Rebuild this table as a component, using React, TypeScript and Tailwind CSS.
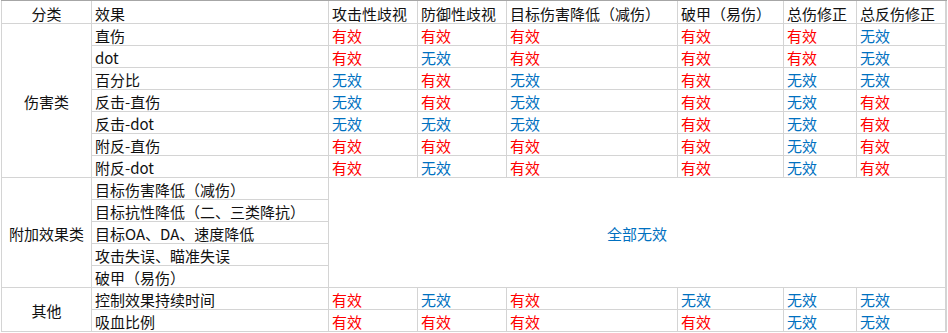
const cols = ["攻击性歧视", "防御性歧视", "目标伤害降低（减伤）", "破甲（易伤）", "总伤修正", "总反伤修正"];

// 1 = 有效, 0 = 无效
const damageRows: [string, number[]][] = [
  ["直伤", [1, 1, 1, 1, 1, 0]],
  ["dot", [1, 0, 1, 1, 1, 0]],
  ["百分比", [0, 1, 0, 1, 0, 0]],
  ["反击-直伤", [0, 1, 0, 1, 0, 1]],
  ["反击-dot", [0, 0, 0, 1, 0, 1]],
  ["附反-直伤", [1, 1, 1, 1, 0, 1]],
  ["附反-dot", [1, 0, 1, 1, 0, 1]],
];

const extraRows = ["目标伤害降低（减伤）", "目标抗性降低（二、三类降抗）", "目标OA、DA、速度降低", "攻击失误、瞄准失误", "破甲（易伤）"];

const otherRows: [string, number[]][] = [
  ["控制效果持续时间", [1, 0, 1, 0, 0, 0]],
  ["吸血比例", [1, 1, 1, 1, 0, 0]],
];

function Cell({ children, className = "" }: { children?: React.ReactNode; className?: string }) {
  return <div className={`bg-white flex items-center px-[3px] pt-[2px] whitespace-nowrap ${className}`}>{children}</div>;
}

function Val({ on }: { on: number }) {
  return <Cell className={on ? "text-[#ff0000]" : "text-[#0070c0]"}>{on ? "有效" : "无效"}</Cell>;
}

export default function App() {
  return (
    <div className="w-[948px] h-[333px] bg-white overflow-hidden font-['Microsoft_YaHei','Noto_Sans_CJK_SC',sans-serif] text-[15px] leading-none text-[#111]">
      <div className="ml-px w-[946px] border-t border-[#a6a6a6]">
        <div className="grid grid-cols-[89px_236px_88px_88px_170px_105px_72px_88px] grid-rows-[22px_repeat(14,21px)] gap-px bg-[#d4d4d4] px-px pb-px">
          <Cell className="justify-center">分类</Cell>
          <Cell>效果</Cell>
          {cols.map((c) => (
            <Cell key={c}>{c}</Cell>
          ))}

          <Cell className="row-span-7 justify-center">伤害类</Cell>
          {damageRows.map(([name, vals]) => (
            <div key={name} className="contents">
              <Cell>{name}</Cell>
              {vals.map((v, i) => (
                <Val key={i} on={v} />
              ))}
            </div>
          ))}

          <Cell className="row-span-5 justify-center">附加效果类</Cell>
          <Cell>{extraRows[0]}</Cell>
          <Cell className="row-span-5 col-span-6 justify-center text-[#0070c0]">全部无效</Cell>
          {extraRows.slice(1).map((r) => (
            <Cell key={r}>{r}</Cell>
          ))}

          <Cell className="row-span-2 justify-center">其他</Cell>
          {otherRows.map(([name, vals]) => (
            <div key={name} className="contents">
              <Cell>{name}</Cell>
              {vals.map((v, i) => (
                <Val key={i} on={v} />
              ))}
            </div>
          ))}
        </div>
      </div>
    </div>
  );
}
